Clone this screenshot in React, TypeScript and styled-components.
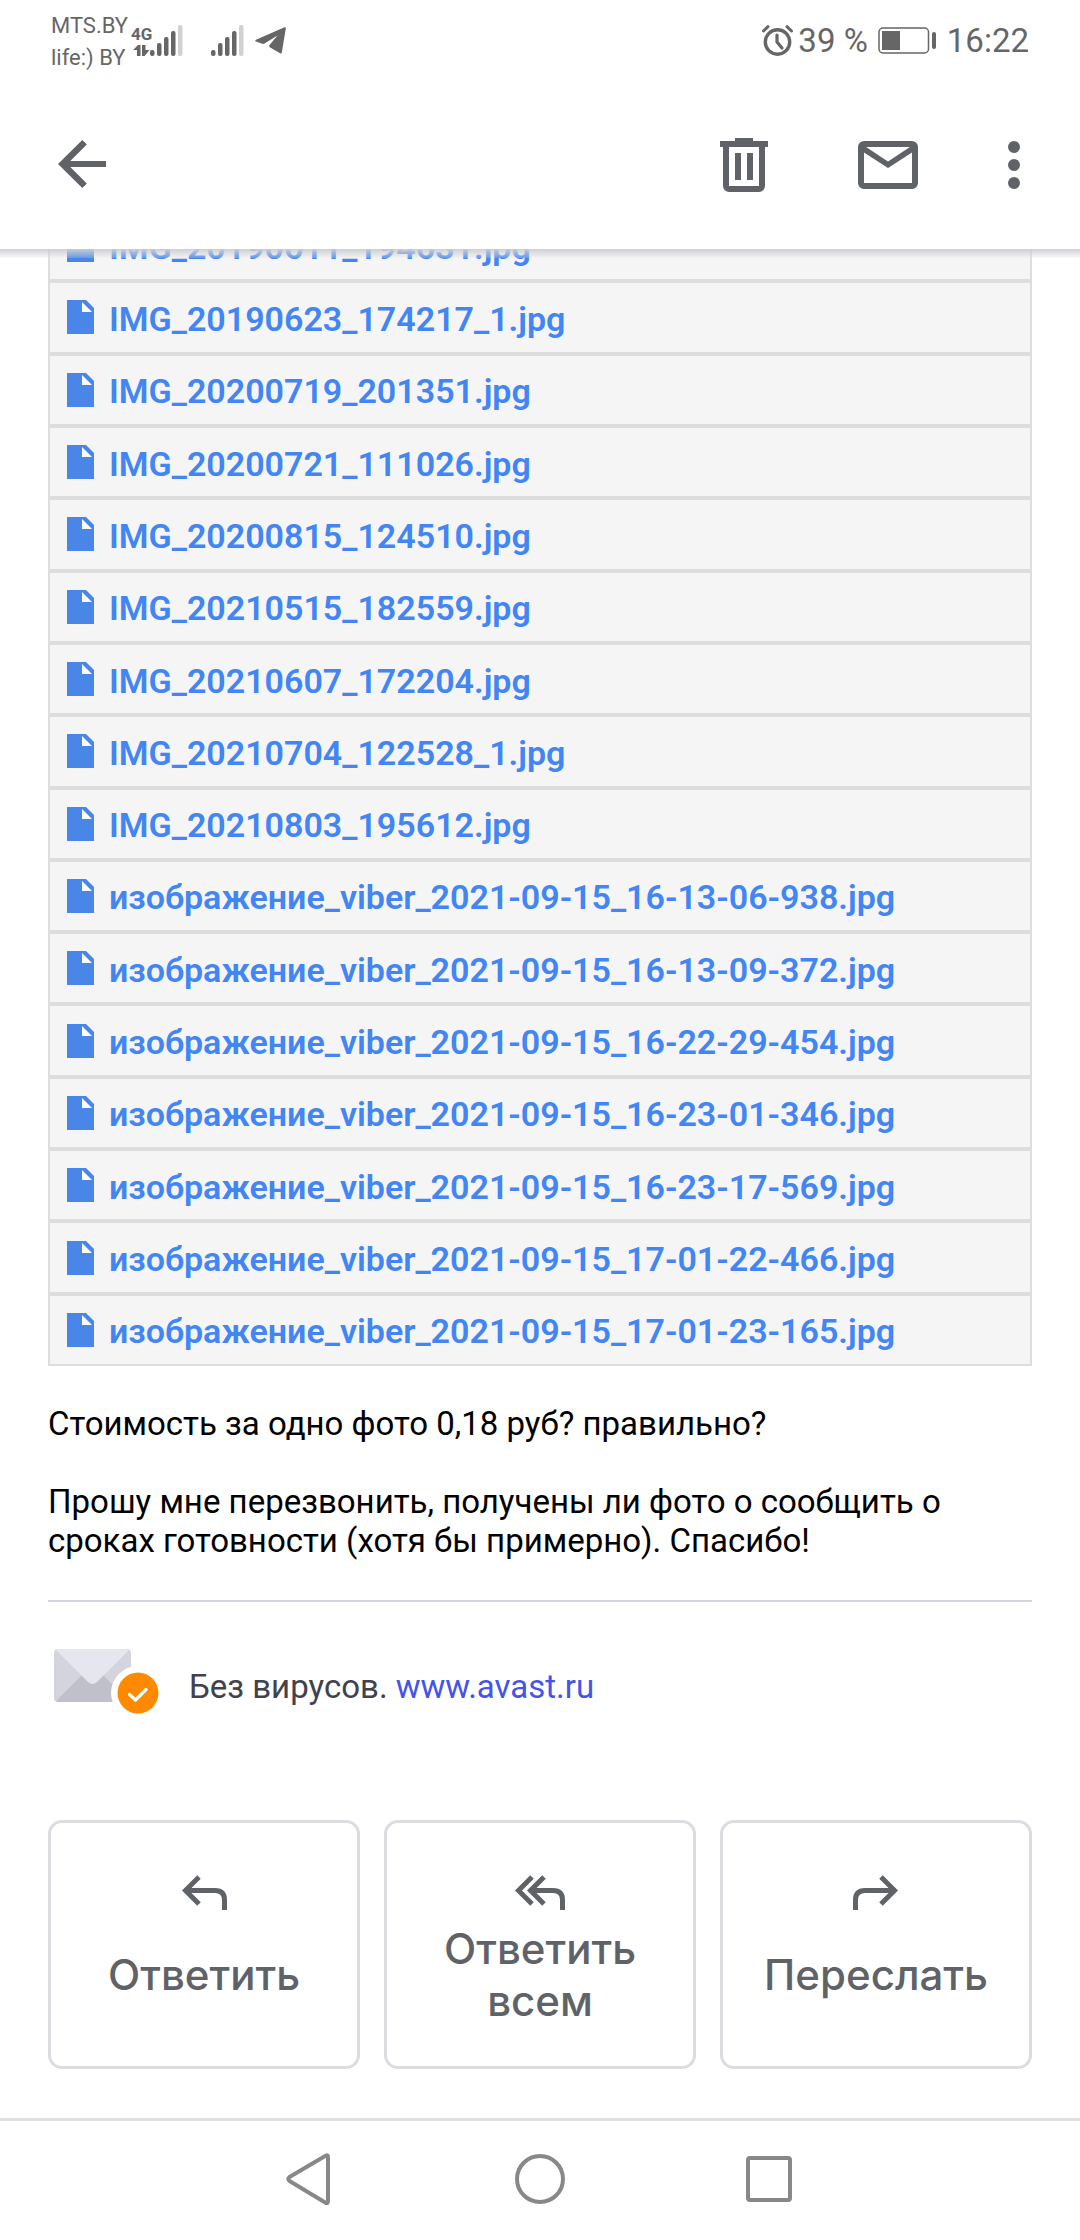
import React from "react";
import styled, { createGlobalStyle } from "styled-components";

const GlobalStyle = createGlobalStyle`
  * { box-sizing: border-box; }
  body { margin: 0; background: #fff; font-family: Roboto, "Noto Sans", sans-serif; }
  button { font: inherit; color: inherit; background: none; border: 0; padding: 0; cursor: pointer; }
  svg { display: block; flex: none; }
`;

const Screen = styled.div`
  min-height: 100vh;
  display: flex;
  flex-direction: column;
  color: #000;
`;

const Header = styled.header`
  position: relative;
  z-index: 1;
  background: #fff;
  &::after {
    content: "";
    position: absolute;
    left: 0;
    right: 0;
    top: 100%;
    height: 9px;
    background: linear-gradient(rgba(204, 206, 210, 0.96), rgba(232, 233, 235, 0.2));
  }
`;

const StatusBar = styled.div`
  height: 81px;
  padding: 0 51px;
  display: flex;
  align-items: center;
  justify-content: space-between;
  color: #666;
`;

const StatusGroup = styled.div<{ $gap: number }>`
  display: flex;
  align-items: center;
  gap: ${(p) => p.$gap}px;
`;

const Carriers = styled.div`
  font-size: 22px;
  line-height: 32px;
  padding-top: 2px;
`;

const Network = styled.div`
  display: flex;
  align-items: flex-end;
`;

const NetworkType = styled.div`
  width: 17px;
  display: flex;
  flex-direction: column;
  align-items: center;
  gap: 2px;
  font: bold 17px/18px "Liberation Sans Narrow", Roboto, sans-serif;
`;

const StatusValue = styled.span`
  font-size: 33px;
  line-height: 39px;
`;

const Toolbar = styled.div`
  height: 168px;
  padding: 0 12px 0 10px;
  display: flex;
  align-items: center;
  color: #5f6368;
`;

const ToolButton = styled.button<{ $width: number }>`
  width: ${(p) => p.$width}px;
  height: 144px;
  display: flex;
  align-items: center;
  justify-content: center;
`;

const Spacer = styled.div`
  flex: 1;
`;

const Viewport = styled.main`
  flex: 1;
  overflow: hidden;
  padding: 0 48px;
`;

const Attachments = styled.ul`
  list-style: none;
  margin: -40px 0 0;
  padding: 0;
  display: grid;
  grid-auto-rows: 1fr;
  min-height: 1157px;
`;

const Attachment = styled.li`
  display: flex;
  background: #f5f5f5;
  border: 2px solid #ddd;
`;

const FileLink = styled.a`
  flex: 1;
  display: flex;
  align-items: center;
  gap: 15px;
  padding-left: 17px;
  color: #4285f4;
  font-size: 34px;
  line-height: 39px;
  font-weight: 600;
  text-decoration: none;
`;

const FileName = styled.span`
  padding-top: 4px;
`;

const Message = styled.div`
  margin: 38px 0 40px;
  display: grid;
  gap: 39px;
`;

const Paragraph = styled.p`
  margin: 0;
  font-size: 33px;
  line-height: 39px;
`;

const Signature = styled.div`
  border-top: 2px solid #d3d4de;
  padding: 46px 0 0 5px;
  display: flex;
  align-items: center;
  gap: 29px;
  color: #41424e;
  font-size: 33px;
  line-height: 39px;
`;

const SignatureText = styled.span`
  padding-top: 10px;
`;

const SiteLink = styled.a`
  color: #4453ea;
  text-decoration: none;
`;

const Actions = styled.div`
  margin: 106px 0 49px;
  display: grid;
  grid-template-columns: repeat(3, 1fr);
  gap: 24px;
`;

const ActionButton = styled.button`
  && {
    height: 249px;
    padding: 42px 24px 0;
    border: 3px solid #dadce0;
    border-radius: 14px;
    display: flex;
    flex-direction: column;
    align-items: center;
    color: #5f6368;
    font: 500 42px/52px Inter, Roboto, sans-serif;
  }
`;

const ActionLabel = styled.span`
  min-height: 104px;
  display: flex;
  align-items: center;
  text-align: center;
`;

const NavBar = styled.nav`
  height: 122px;
  padding-bottom: 2px;
  border-top: 3px solid #e0e0e0;
  display: flex;
  align-items: center;
  justify-content: center;
  gap: 169px;
  color: #888;
`;

const NavButton = styled.button`
  width: 60px;
  height: 60px;
`;

const SignalBars = () => (
  <svg width="33" height="31" viewBox="0 0 33 31" fill="currentColor" aria-hidden="true">
    <rect x="0" y="25" width="4.500" height="6" rx="2" />
    <rect x="7" y="18" width="4.500" height="13" rx="2" />
    <rect x="14" y="12" width="4.500" height="19" rx="2" />
    <rect x="21" y="6" width="4.500" height="25" rx="2" />
    <rect x="28" y="0" width="4.500" height="31" rx="2" opacity="0.3" />
  </svg>
);

const DataArrows = () => (
  <svg width="17" height="11" viewBox="0 0 17 11" fill="currentColor" aria-hidden="true">
    <path d="M0 5 5 0h2.500v11H4V5zM9 0h3.500v5h4l-5 6H9z" />
  </svg>
);

const TelegramIcon = () => (
  <svg width="31" height="27" viewBox="0 0 31 27" fill="currentColor" aria-hidden="true">
    <path d="M29.500 0.200Q31 0 30.800 1.500L26.800 25.500Q26.300 27 25 26.200L14.800 20.200Q13.500 19.300 14.500 18L22.500 8.500 9.500 16.500Q8 17.300 6.500 16.600L1 14.600Q-0.500 13.800 1 12.800Z" />
  </svg>
);

const AlarmIcon = () => (
  <svg width="31" height="31" viewBox="0 0 31 31" fill="none" stroke="currentColor" aria-hidden="true">
    <circle cx="15.500" cy="17" r="12.200" strokeWidth="3.400" />
    <path d="M15 10v7l5 6" strokeWidth="3.200" strokeLinecap="round" strokeLinejoin="round" />
    <path d="M1.500 6 6 1.700M29.500 6 25 1.700" strokeWidth="3" strokeLinecap="round" />
  </svg>
);

const BatteryIcon = () => (
  <svg width="59" height="27" viewBox="0 0 59 27" aria-hidden="true">
    <rect x="1" y="1" width="49.500" height="25" rx="4" fill="none" stroke="currentColor" strokeWidth="1.500" />
    <rect x="4" y="4" width="18" height="19" fill="currentColor" />
    <rect x="54" y="5" width="4" height="17" rx="2" fill="currentColor" />
  </svg>
);

const BackIcon = () => (
  <svg width="72" height="72" viewBox="0 0 24 24" fill="currentColor" aria-hidden="true">
    <path d="M4 11.700 12.100 3.650 13.600 5.150 8.100 10.670H20V12.670H8.100L13.600 18.200 12.100 19.700z" />
  </svg>
);

const TrashIcon = () => (
  <svg width="72" height="72" viewBox="0 0 24 24" fill="currentColor" aria-hidden="true">
    <path d="M9 3h6v1h5v2h-1v13a2 2 0 0 1-2 2H7a2 2 0 0 1-2-2V6H4V4h5zM7 6v13h10V6zM9 8h2v9H9zM13 8h2v9h-2z" fillRule="evenodd" />
  </svg>
);

const MailIcon = () => (
  <svg width="72" height="72" viewBox="0 0 24 24" fill="currentColor" aria-hidden="true">
    <path d="M4 4h16a2 2 0 0 1 2 2v12a2 2 0 0 1-2 2H4a2 2 0 0 1-2-2V6a2 2 0 0 1 2-2zM4.700 6 12 10.800 19.300 6zM4 7.800V18h16V7.800L12 13z" fillRule="evenodd" />
  </svg>
);

const MoreIcon = () => (
  <svg width="72" height="72" viewBox="0 0 24 24" fill="currentColor" aria-hidden="true">
    <circle cx="12" cy="6" r="2" />
    <circle cx="12" cy="12" r="2" />
    <circle cx="12" cy="18" r="2" />
  </svg>
);

const FileIcon = () => (
  <svg width="27" height="34" viewBox="0 0 27 34" aria-hidden="true">
    <path d="M0 0h19l8 8v26H0z" fill="#4986e7" />
    <path d="M15 2l10 10H15z" fill="#fff" />
  </svg>
);

const SafeMailIcon = () => (
  <svg width="107" height="66" viewBox="0 0 107 66" aria-hidden="true">
    <rect x="1" y="1" width="77" height="53" rx="4" fill="#d4d4de" />
    <path d="M3 53 28 28h23l25 25-2 1H5z" fill="#c0c0ca" />
    <path d="M3 2Q4 1 6 1h67q2 0 3 1L44 34q-4.500 4-9 0z" fill="#e6e6ef" />
    <circle cx="85" cy="45" r="27" fill="#fff" />
    <circle cx="85" cy="45" r="20.500" fill="#ff8a00" />
    <path d="M76.500 46.500l6 5.500 10.500-10.500" fill="none" stroke="#fff" strokeWidth="3.200" strokeLinecap="round" strokeLinejoin="round" />
  </svg>
);

const ReplyIcon = ({ flip = false }: { flip?: boolean }) => (
  <svg width="60" height="58" viewBox="0 0 60 58" fill="none" stroke="currentColor" strokeWidth="5" aria-hidden="true">
    <g transform={flip ? "translate(60 0) scale(-1 1)" : undefined}>
      <path d="M25 12 11.500 25.500 25 39M11.500 25.500H41Q50.500 25.500 50.500 35V45" />
    </g>
  </svg>
);

const ReplyAllIcon = () => (
  <svg width="60" height="58" viewBox="0 0 60 58" fill="none" stroke="currentColor" strokeWidth="5" aria-hidden="true">
    <path d="M22 12 8.500 25.500 22 39M34 12 20.500 25.500 34 39M20.500 25.500H43Q52.500 25.500 52.500 35V45" />
  </svg>
);

const files = [
  "IMG_20190611_194631.jpg",
  "IMG_20190623_174217_1.jpg",
  "IMG_20200719_201351.jpg",
  "IMG_20200721_111026.jpg",
  "IMG_20200815_124510.jpg",
  "IMG_20210515_182559.jpg",
  "IMG_20210607_172204.jpg",
  "IMG_20210704_122528_1.jpg",
  "IMG_20210803_195612.jpg",
  "изображение_viber_2021-09-15_16-13-06-938.jpg",
  "изображение_viber_2021-09-15_16-13-09-372.jpg",
  "изображение_viber_2021-09-15_16-22-29-454.jpg",
  "изображение_viber_2021-09-15_16-23-01-346.jpg",
  "изображение_viber_2021-09-15_16-23-17-569.jpg",
  "изображение_viber_2021-09-15_17-01-22-466.jpg",
  "изображение_viber_2021-09-15_17-01-23-165.jpg",
];

const actions = [
  { label: "Ответить", icon: <ReplyIcon /> },
  { label: "Ответить всем", icon: <ReplyAllIcon /> },
  { label: "Переслать", icon: <ReplyIcon flip /> },
];

export default function App() {
  return (
    <Screen>
      <GlobalStyle />
      <Header>
        <StatusBar>
          <StatusGroup $gap={5}>
            <Carriers>
              <div>MTS.BY</div>
              <div>life:) BY</div>
            </Carriers>
            <StatusGroup $gap={28}>
              <Network>
                <NetworkType>
                  4G
                  <DataArrows />
                </NetworkType>
                <SignalBars />
              </Network>
              <StatusGroup $gap={11}>
                <SignalBars />
                <TelegramIcon />
              </StatusGroup>
            </StatusGroup>
          </StatusGroup>
          <StatusGroup $gap={10}>
            <StatusGroup $gap={5}>
              <AlarmIcon />
              <StatusValue>39 %</StatusValue>
            </StatusGroup>
            <BatteryIcon />
            <StatusValue>16:22</StatusValue>
          </StatusGroup>
        </StatusBar>
        <Toolbar>
          <ToolButton $width={144} aria-label="Назад"><BackIcon /></ToolButton>
          <Spacer />
          <ToolButton $width={144} aria-label="Удалить"><TrashIcon /></ToolButton>
          <ToolButton $width={144} aria-label="Отметить как непрочитанное"><MailIcon /></ToolButton>
          <ToolButton $width={108} aria-label="Ещё"><MoreIcon /></ToolButton>
        </Toolbar>
      </Header>
      <Viewport>
        <Attachments>
          {files.map((name) => (
            <Attachment key={name}>
              <FileLink href="#">
                <FileIcon />
                <FileName>{name}</FileName>
              </FileLink>
            </Attachment>
          ))}
        </Attachments>
        <Message>
          <Paragraph>Стоимость за одно фото 0,18 руб? правильно?</Paragraph>
          <Paragraph>
            Прошу мне перезвонить, получены ли фото о сообщить о сроках готовности (хотя бы примерно). Спасибо!
          </Paragraph>
        </Message>
        <Signature>
          <SafeMailIcon />
          <SignatureText>
            Без вирусов. <SiteLink href="#">www.avast.ru</SiteLink>
          </SignatureText>
        </Signature>
        <Actions>
          {actions.map(({ label, icon }) => (
            <ActionButton key={label}>
              {icon}
              <ActionLabel>{label}</ActionLabel>
            </ActionButton>
          ))}
        </Actions>
      </Viewport>
      <NavBar>
        <NavButton aria-label="Назад">
          <svg width="60" height="60" viewBox="0 0 60 60" fill="none" stroke="currentColor" strokeWidth="4" strokeLinejoin="round" aria-hidden="true">
            <path d="M8.500 27Q6 29 8.500 31L45 53Q47 53.500 47 51V7Q47 4.500 45 5.500Z" />
          </svg>
        </NavButton>
        <NavButton aria-label="Домой">
          <svg width="60" height="60" viewBox="0 0 60 60" fill="none" stroke="currentColor" strokeWidth="4" aria-hidden="true">
            <circle cx="30" cy="29" r="23" />
          </svg>
        </NavButton>
        <NavButton aria-label="Недавние приложения">
          <svg width="60" height="60" viewBox="0 0 60 60" fill="none" stroke="currentColor" strokeWidth="4" aria-hidden="true">
            <rect x="9" y="8" width="42" height="42" rx="2" />
          </svg>
        </NavButton>
      </NavBar>
    </Screen>
  );
}
